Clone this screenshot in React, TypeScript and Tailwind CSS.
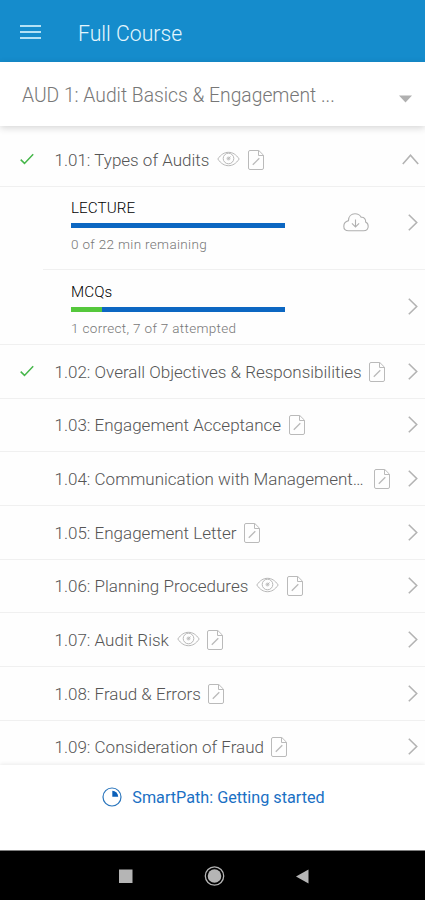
import React from 'react';

type Lesson = {
  id: string;
  title: string;
  row: string;
  done?: boolean;
  video?: boolean;
  open?: boolean;
  iconGap?: string;
};

const firstLesson: Lesson = { id: '1.01', title: 'Types of Audits', row: 'h-[53px]', done: true, video: true, open: true };

const lessons: Lesson[] = [
  { id: '1.02', title: 'Overall Objectives & Responsibilities', row: 'h-[54px]', done: true },
  { id: '1.03', title: 'Engagement Acceptance', row: 'h-[53px]' },
  { id: '1.04', title: 'Communication with Management…', row: 'h-[54px]', iconGap: 'ml-[10px]' },
  { id: '1.05', title: 'Engagement Letter', row: 'h-[54px]' },
  { id: '1.06', title: 'Planning Procedures', row: 'h-[53px]', video: true },
  { id: '1.07', title: 'Audit Risk', row: 'h-[54px]', video: true },
  { id: '1.08', title: 'Fraud & Errors', row: 'h-[54px]' },
  { id: '1.09', title: 'Consideration of Fraud', row: 'h-[53px]' },
];

function CheckIcon() {
  return (
    <svg width="14" height="12" viewBox="0 0 14 12" fill="none" stroke="#45b649" strokeWidth="1.5">
      <path d="M0.7 6.6 4.5 10.4 13.2 1.2" />
    </svg>
  );
}

function EyeIcon() {
  return (
    <svg width="23" height="16" viewBox="0 0 23 16" fill="none" stroke="#b8b8b8" strokeWidth="1">
      <path d="M0.8 8C4 3.4 7.4 1.3 11.5 1.3S19 3.4 22.2 8C19 12.6 15.6 14.7 11.5 14.7S4 12.6 0.8 8Z" />
      <circle cx="11.5" cy="7.5" r="5.3" />
      <circle cx="11.5" cy="7.5" r="2" fill="#cfcfcf" stroke="none" />
      <path d="M11 8 13.5 5.5" />
    </svg>
  );
}

function NoteIcon() {
  return (
    <svg width="16" height="20" viewBox="0 0 16 20" fill="none" stroke="#bababa" strokeWidth="1">
      <path d="M2 0.5H10.8L15.5 5.2V18A1.5 1.5 0 0 1 14 19.5H2A1.5 1.5 0 0 1 0.5 18V2A1.5 1.5 0 0 1 2 0.5Z" />
      <path d="M10.5 0.8V5.5H15.3" />
      <path d="M4.8 14.8 11.3 8.3" strokeWidth="1.3" />
    </svg>
  );
}

function ChevronRight() {
  return (
    <svg width="10" height="17" viewBox="0 0 10 17" fill="none" stroke="#b3b3b3" strokeWidth="1.6">
      <path d="M0.8 0.8 8.7 8.5 0.8 16.2" />
    </svg>
  );
}

function ChevronUp() {
  return (
    <svg width="17" height="11" viewBox="0 0 17 11" fill="none" stroke="#b3b3b3" strokeWidth="1.6">
      <path d="M0.8 10 8.5 1.3 16.2 10" />
    </svg>
  );
}

function CloudIcon() {
  return (
    <svg width="26" height="19" viewBox="0 0 26 19" fill="none" stroke="#b0b0b0" strokeWidth="1.1">
      <path d="M5.5 17.8H20.5C23.5 17.8 25.2 15.7 25.2 13.3C25.2 11 23.9 9.6 22.6 9C23 6.3 21.2 4 18.2 4.3C16.9 1.9 14.7 0.8 12 0.8C8.2 0.8 5.6 3.5 5.5 7.6C2.6 8.4 0.8 10.4 0.8 13.2C0.8 16 2.8 17.8 5.5 17.8Z" />
      <path d="M12.5 6.5V14M8.9 10.4 12.5 14 16.1 10.4" />
    </svg>
  );
}

function LessonRow({ lesson }: { lesson: Lesson }) {
  return (
    <div className={`flex shrink-0 items-center border-b border-[#f0f0f0] ${lesson.row}`}>
      <div className="w-[54.5px] shrink-0 pb-0.5 pl-5">{lesson.done && <CheckIcon />}</div>
      <span className="whitespace-nowrap text-[17px] font-light leading-6 text-[#555]">
        {lesson.id}: {lesson.title}
      </span>
      {lesson.video && (
        <span className="ml-2 pb-0.5">
          <EyeIcon />
        </span>
      )}
      <span className={lesson.iconGap || 'ml-[7.5px]'}>
        <NoteIcon />
      </span>
      <span className={lesson.open ? 'ml-auto pb-0.5 pr-[6px]' : 'ml-auto pb-px pr-[7px]'}>
        {lesson.open ? <ChevronUp /> : <ChevronRight />}
      </span>
    </div>
  );
}

function Activity({ name, note, correct, download }: { name: string; note: string; correct: number; download?: boolean }) {
  return (
    <div className="flex w-full items-center">
      <div className="w-[214px] pt-1.5">
        <p className="text-[15.2px] font-light leading-5 tracking-[0.1px] text-black">{name}</p>
        <div className="mt-[5px] h-[5px] bg-[#0c67c2]">
          <div className="h-full bg-[#55c83c]" style={{ width: `${correct}%` }} />
        </div>
        <p className="mt-[6px] whitespace-nowrap text-[13.5px] font-light leading-5 tracking-[0.33px] text-[#777]">{note}</p>
      </div>
      {download && (
        <span className="ml-[58px] pb-0.5">
          <CloudIcon />
        </span>
      )}
      <span className="ml-auto pb-0.5 pr-[7px]">
        <ChevronRight />
      </span>
    </div>
  );
}

export default function App() {
  return (
    <div className="flex h-[900px] w-[425px] flex-col overflow-hidden bg-white font-['Roboto',sans-serif]">
      <header className="flex h-[62px] shrink-0 items-center bg-[#158ccc] pl-5 pt-1">
        <div className="flex w-[58px] flex-col gap-1 pb-0.5">
          <span className="h-0.5 w-[21px] bg-[#b3e1f5]" />
          <span className="h-0.5 w-[21px] bg-[#b3e1f5]" />
          <span className="h-0.5 w-[21px] bg-[#b3e1f5]" />
        </div>
        <h1 className="pt-0.5 text-[21.2px] font-light leading-7 text-[#e4f6fd]">Full Course</h1>
      </header>

      <div className="z-10 flex h-16 shrink-0 items-center justify-between bg-white pl-[22px] pr-[13px] shadow-[0_2px_7px_rgba(0,0,0,0.16)]">
        <span className="pt-1 text-[19.3px] font-light leading-7 text-[#777]">AUD 1: Audit Basics &amp; Engagement ...</span>
        <svg className="mt-2.5" width="13" height="8" viewBox="0 0 13 8">
          <path d="M0 0.5H13L6.5 7.5Z" fill="#b0b0b0" />
        </svg>
      </div>

      <main className="flex h-[639px] shrink-0 flex-col overflow-hidden bg-[#fefefe] pt-2">
        <LessonRow lesson={firstLesson} />
        <div className="ml-[43px] flex h-[83px] shrink-0 border-b border-[#f0f0f0] pb-2.5 pl-7">
          <Activity name="LECTURE" note="0 of 22 min remaining" correct={0} download />
        </div>
        <div className="flex h-[75px] shrink-0 border-b border-[#f0f0f0] pl-[71px]">
          <Activity name="MCQs" note="1 correct, 7 of 7 attempted" correct={14.3} />
        </div>
        {lessons.map(lesson => (
          <LessonRow key={lesson.id} lesson={lesson} />
        ))}
      </main>

      <footer className="z-10 flex h-[85px] shrink-0 justify-center gap-2.5 bg-white pl-0.5 pt-[22px] shadow-[0_-1px_4px_rgba(0,0,0,0.08)]">
        <svg width="20" height="20" viewBox="0 0 20 20">
          <circle cx="10" cy="10" r="9" fill="none" stroke="#2b76bd" strokeWidth="1.2" />
          <path d="M10.3 3.8A6 6 0 0 1 16.2 9.7H10.3Z" fill="#0b5fb8" />
        </svg>
        <span className="pt-px text-[16.2px] leading-5 text-[#1a70c4]">SmartPath: Getting started</span>
      </footer>

      <nav className="flex h-[50px] shrink-0 items-center border-t border-[#808080] bg-black pl-[119px]">
        <svg width="190" height="20" viewBox="0 0 190 20" fill="#b5b5b5">
          <rect x="0" y="3.5" width="13.5" height="13.5" />
          <circle cx="95.5" cy="10" r="9.2" fill="none" stroke="#b5b5b5" strokeWidth="1.3" />
          <circle cx="95.5" cy="10" r="6.8" />
          <path d="M177 10.5 189.5 3.5V17.5Z" />
        </svg>
      </nav>
    </div>
  );
}
